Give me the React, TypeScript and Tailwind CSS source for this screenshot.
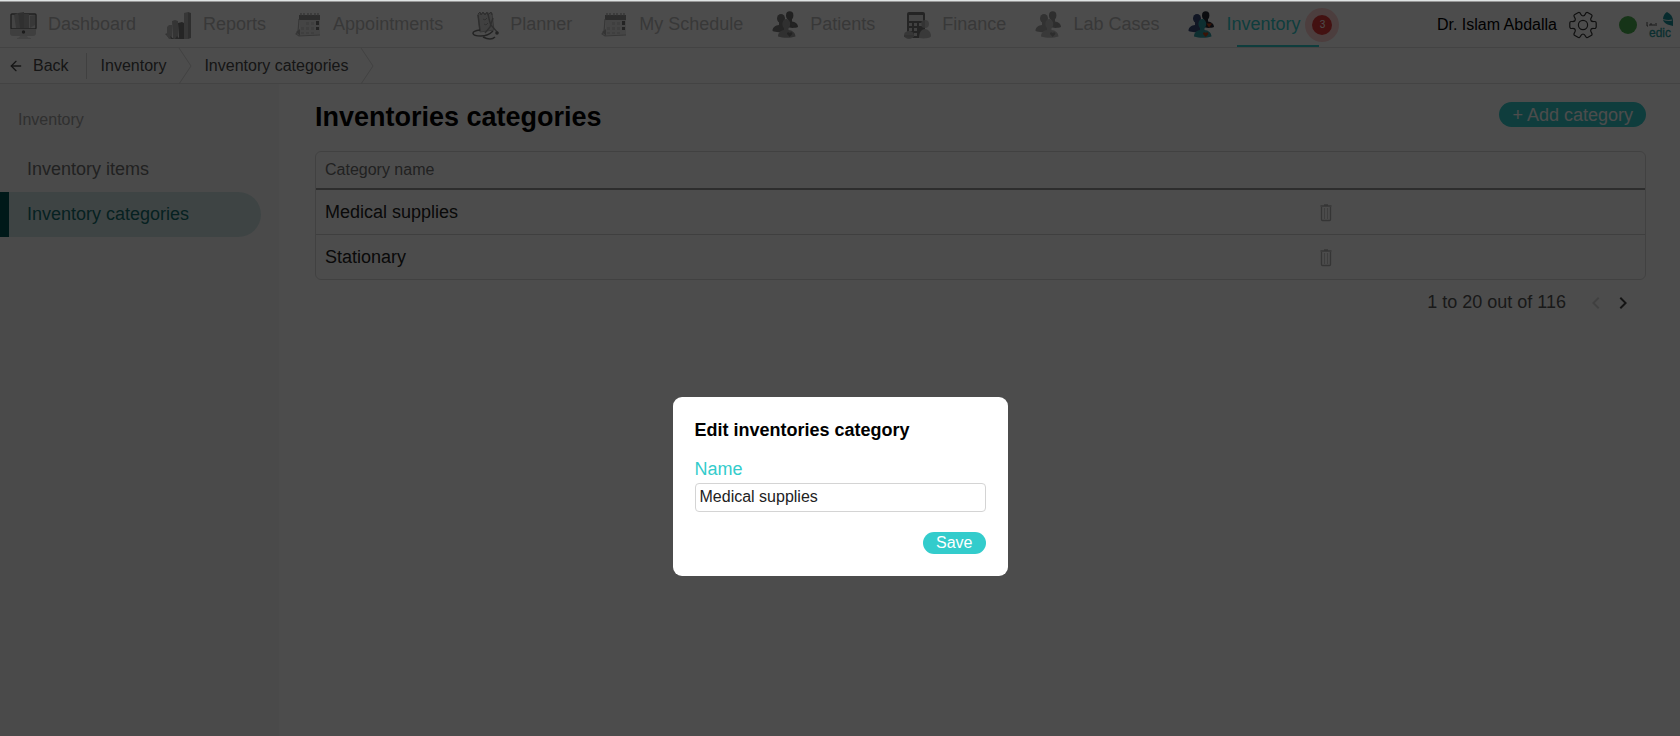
import * as React from 'react';
import { ArrowLeft } from 'lucide-react';
import { MdChevronLeft, MdChevronRight } from 'react-icons/md';

const DashboardIcon = () => (
  <svg viewBox="0 0 28 30" className="h-[30px] w-7 shrink-0" aria-hidden="true">
    <rect x="2" y="4" width="25" height="15" rx="1" fill="#e4e4e4" stroke="#6c6c6c" strokeWidth="1.4" />
    <path d="M5 5l4-2 3 15H7z" fill="#b9b9b9" />
    <path d="M9 3l6-1v16h-4z" fill="#a2a2a2" />
    <path d="M15 4h5v14h-5z" fill="#adadad" />
    <path d="M21 6l5-1v10l-5 3z" fill="#bdbdbd" />
    <path d="M1 19h26v4a3 3 0 0 1-3 3H4a3 3 0 0 1-3-3z" fill="#d2d2d2" />
    <circle cx="14.500" cy="22" r="1.700" fill="#5e5e5e" />
    <path d="M11 26h7l1 1.500 3 .5v1H8v-1l2-.5z" fill="#dcdcdc" />
  </svg>
);

const ReportsIcon = () => (
  <svg viewBox="0 0 28 30" className="h-[30px] w-7 shrink-0" aria-hidden="true">
    <path d="M1 24l5-2v7z" fill="#aaa" />
    <path d="M3 17l2-2h3v14H5l-2-3z" fill="#bcbcbc" />
    <path d="M8 11l3-1 3 1v18H9z" fill="#b2b2b2" />
    <path d="M14 13l4-1 2 1v16h-5z" fill="#7c7c7c" />
    <path d="M20 3l4-1v27h-4z" fill="#bababa" />
    <path d="M24 2l3 1v25l-3 1z" fill="#9c9c9c" />
    <path d="M6 26l4 3H7zM13 26l3 3h-5z" fill="#858585" />
  </svg>
);

const CalendarIcon = () => (
  <svg viewBox="0 0 28 30" className="h-[30px] w-7 shrink-0" aria-hidden="true">
    <path d="M6 8h20v17L5 26z" fill="#e8e8e8" />
    <path d="M5 5h21v5H5z" fill="#979797" />
    <path d="M7 3v3M10 3v3M14 3v3M17 3v3M21 3v3M24 3v3" stroke="#a8a8a8" strokeWidth="1.200" />
    <path d="M5 9L4 22l-2 2 3 2 21-1" fill="none" stroke="#b8b8b8" strokeWidth="1.200" />
    <path d="M2 22l4-3v7z" fill="#b0b0b0" />
    <path d="M12 12h3v3h-3zM17 12h3v3h-3zM7 17h3v3H7zM12 17h3v3h-3zM17 17h3v3h-3zM7 22h3v2H7zM12 22h3v2h-3zM17 22h3v2h-3z" fill="#d3d3d3" />
    <path d="M22 11h3v4h-3zM22 17h3v3h-3z" fill="#777" />
  </svg>
);

const PlannerIcon = () => (
  <svg viewBox="0 0 28 30" className="h-[30px] w-7 shrink-0" aria-hidden="true">
    <path d="M7 4l14-1 2 17-14 2z" fill="#d6d6d6" stroke="#b5b5b5" />
    <path d="M7 4l2-2 1 3 2-3 2 3 2-3 1 3 3-3 1 3" fill="none" stroke="#999" />
    <path d="M7 5l2 16" stroke="#999" strokeWidth="1.500" />
    <path d="M12 9l2 1 2-2M13 14l2 1 2-2" fill="none" stroke="#a0a0a0" />
    <path d="M17 4c1 5 2 9 3 11l7 8M22 8l-3 9-5 6" fill="none" stroke="#9a9a9a" strokeWidth="1.400" />
    <path d="M9 20c-10 1-9 6 1 6 6 0 9-2 12-5M12 27c4 2 9 3 12 0" fill="none" stroke="#777" strokeWidth="1.500" />
    <circle cx="26" cy="23" r="1.800" fill="#777" />
  </svg>
);

const FinanceIcon = () => (
  <svg viewBox="0 0 28 30" className="h-[30px] w-7 shrink-0" aria-hidden="true">
    <rect x="4" y="2" width="18" height="26" rx="2" fill="#797979" />
    <rect x="6" y="5" width="14" height="6" fill="#e8e8e8" />
    <path d="M6 13h3v3H6zM11 13h3v3h-3zM16 13h3v3h-3zM6 18h3v3H6zM11 18h3v3h-3zM11 23h3v3h-3z" fill="#dedede" />
    <circle cx="22" cy="14" r="4" fill="#bbb" fillOpacity=".8" />
    <path d="M16 28c0-6 3-9 6-9s6 3 6 7c0 2-6 3-12 2z" fill="#c0c0c0" />
    <ellipse cx="6" cy="25" rx="5" ry="4" fill="#b9b9b9" />
    <path d="M1 25h10v2a8 3 0 0 1-10 0z" fill="#a8a8a8" />
  </svg>
);

interface PeopleIconProps {
  left: string;
  right: string;
  front: string;
  heart: string;
}

const PeopleIcon = ({ left, right, front, heart }: PeopleIconProps) => (
  <svg viewBox="0 0 28 30" className="h-[30px] w-7 shrink-0" aria-hidden="true">
    <ellipse cx="18.700" cy="5.500" rx="3.700" ry="4.200" fill={right} />
    <path d="M17 9h4v2.500c3 .5 6 2 6 5.500-3 1.200-8 1.200-11 0z" fill={right} />
    <path d="M19.500 13.500h5.500l-3 4z" fill={heart} />
    <ellipse cx="10" cy="8.500" rx="4" ry="4.600" fill={left} />
    <path d="M8 12h4v3c2 0 3 2 3 6-5 1.500-10 1.500-13.500 0 0-4 3-5.500 6.500-6z" fill={left} />
    <path d="M13 18h4.500v2c4 .4 6.800 2.500 7 6.500-5 1.800-12.500 1.800-17.500 0 .2-4 2.500-6 6-6.500z" fill={front} />
    <ellipse cx="15.300" cy="14" rx="3.900" ry="4.900" fill={front} />
    <path d="M18.700 27l-2.500-2.700c-1-2 1.500-3 2.500-1.300 1-1.700 3.500-.7 2.500 1.300z" fill={heart} />
  </svg>
);

const GearIcon = () => (
  <svg viewBox="0 0 28 28" className="size-7" fill="none" stroke="#333" strokeWidth="1.200" aria-hidden="true">
    <circle cx="14" cy="14" r="4.600" />
    {[0, 60, 120, 180, 240, 300].map((angle) => (
      <path
        key={angle}
        transform={`translate(14 14) rotate(${angle})`}
        d="M7.800-4.500C8.800-3.400 9.800-3.400 10.800-3.500Q13.200-3.700 13.200-1.800V1.800Q13.200 3.700 10.800 3.500C9.800 3.400 8.800 3.400 7.800 4.500"
      />
    ))}
  </svg>
);

const ClinicLogo = () => (
  <svg viewBox="0 0 30 30" className="size-[30px]" aria-hidden="true">
    <path d="M18 9c0-3 2-6 4-7 4 2 6 5 6 9v5c-5-1-10-3-10-7z" fill="#1a8f99" />
    <path d="M18 9.500c3 1 6 1.500 9 .5" fill="none" stroke="#d5eeee" strokeWidth="1.200" />
    <path d="M2 12v4h1M5 16v-2h2v2M9 14v2M11 13v3" stroke="#555" fill="none" />
    <text x="4" y="27" fontSize="12" fontFamily="Liberation Sans, sans-serif" fill="#279c9e" stroke="#279c9e" strokeWidth=".3">
      edic
    </text>
  </svg>
);

const TrashIcon = () => (
  <svg viewBox="0 0 12 18" className="h-[18px] w-3" fill="none" stroke="#b2b2b2" aria-hidden="true">
    <path d="M.5 2h11M4 1h4" strokeWidth="1.600" />
    <path d="M1.500 3v12.500q0 1 1 1h7q1 0 1-1V3" strokeWidth="1.400" />
    <path d="M4.500 4v11M7.500 4v11" stroke="#d0d0d0" strokeWidth="1.200" />
  </svg>
);

const grayPeople = { left: '#a8a8a8', right: '#999', front: '#c0c0c0', heart: '#969696' };
const darkPeople = { left: '#7c7c7c', right: '#6e6e6e', front: '#a2a2a2', heart: '#777' };
const colorPeople = { left: '#3a4b78', right: '#272a35', front: '#2f9da5', heart: '#bd461c' };

const navItems = [
  { label: 'Dashboard', icon: <DashboardIcon /> },
  { label: 'Reports', icon: <ReportsIcon /> },
  { label: 'Appointments', icon: <CalendarIcon /> },
  { label: 'Planner', icon: <PlannerIcon /> },
  { label: 'My Schedule', icon: <CalendarIcon /> },
  { label: 'Patients', icon: <PeopleIcon {...darkPeople} /> },
  { label: 'Finance', icon: <FinanceIcon /> },
  { label: 'Lab Cases', icon: <PeopleIcon {...grayPeople} /> },
];

const categories = ['Medical supplies', 'Stationary'];

const CrumbArrow = () => (
  <svg viewBox="0 0 14 36" className="h-9 w-3.5" fill="none" stroke="#d9d9d9" aria-hidden="true">
    <path d="M1 0l12 18L1 36" />
  </svg>
);

const TopNav = () => (
  <header className="flex h-[45px] items-center justify-between bg-white pr-[5px] pl-[9px]">
    <nav className="flex h-full items-center gap-7 text-[18px] text-[#bcbcbc]">
      {navItems.map((item) => (
        <a key={item.label} href="#" className="flex items-center gap-[11px] whitespace-nowrap">
          {item.icon}
          {item.label}
        </a>
      ))}
      <a href="#" className="relative flex h-full items-center gap-[11px] text-[#33cccc]">
        <PeopleIcon {...colorPeople} />
        Inventory
        <span className="-ml-1.5 flex size-[34px] items-center justify-center rounded-full bg-[#ffd0d0]">
          <span className="flex size-5 items-center justify-center rounded-full bg-[#e03a3a] text-[10px] text-white">
            3
          </span>
        </span>
        <span className="absolute right-5 bottom-0 left-[50px] h-0.5 bg-[#33cccc]" />
      </a>
    </nav>
    <div className="flex items-center whitespace-nowrap">
      <span className="text-base text-black">Dr. Islam Abdalla</span>
      <button type="button" aria-label="Settings" className="ml-3">
        <GearIcon />
      </button>
      <span className="ml-[22px] size-[18px] rounded-full bg-[#4caf50]" />
      <a href="#" aria-label="Clinic" className="ml-2">
        <ClinicLogo />
      </a>
    </div>
  </header>
);

const Breadcrumbs = () => (
  <div className="flex h-[37px] items-center border-y border-[#e0e0e0] bg-white pl-2 text-base text-[#4a4a4a]">
    <a href="#" className="flex items-center gap-[9px]">
      <ArrowLeft size={16} />
      Back
    </a>
    <span className="mr-3.5 ml-[17px] h-[26px] w-px bg-[#d6d6d6]" />
    <a href="#" className="mr-3">Inventory</a>
    <CrumbArrow />
    <a href="#" className="mr-3 ml-3">Inventory categories</a>
    <CrumbArrow />
  </div>
);

const Sidebar = () => (
  <aside className="w-[279px] shrink-0 bg-[#f8f8f8] pt-6">
    <p className="pl-[18px] text-base text-[#a0a0a0]">Inventory</p>
    <nav className="mt-[15px] mr-[18px] text-[18px]">
      <a href="#" className="flex h-[45px] items-center pl-[27px] text-[#707070]">
        Inventory items
      </a>
      <a
        href="#"
        className="flex h-[45px] items-center rounded-r-full border-l-9 border-[#005555] bg-[#d0e4e4] pl-[18px] text-[#146e6e]"
      >
        Inventory categories
      </a>
    </nav>
  </aside>
);

const CategoriesTable = () => (
  <div className="overflow-hidden rounded-md border border-[#dadada]">
    <table className="w-full border-collapse text-left text-[18px] text-[#222]">
      <thead>
        <tr className="h-[37px] border-b-2 border-[#969696] text-base text-[#707070]">
          <th className="w-3/4 px-[9px] font-normal">Category name</th>
          <td />
        </tr>
      </thead>
      <tbody>
        {categories.map((category) => (
          <tr key={category} className="h-[45px] border-b border-[#d4d4d4] last:border-b-0">
            <td className="px-[9px] pt-0.5">{category}</td>
            <td className="px-[7px] pt-0.5">
              <button type="button" aria-label={`Delete ${category}`} className="flex">
                <TrashIcon />
              </button>
            </td>
          </tr>
        ))}
      </tbody>
    </table>
  </div>
);

interface EditCategoryModalProps {
  name: string;
  onChange: (value: string) => void;
}

const EditCategoryModal = ({ name, onChange }: EditCategoryModalProps) => (
  <div className="fixed inset-x-0 top-0.5 bottom-0 z-10 flex items-center justify-center bg-black/70 pt-[234px]">
    <form
      role="dialog"
      aria-labelledby="edit-title"
      onSubmit={(e) => e.preventDefault()}
      className="flex w-[335px] flex-col rounded-[9px] bg-white px-[22px] pt-[21px] pb-[22px]"
    >
      <h2 id="edit-title" className="text-[18px] leading-6 font-bold text-black">
        Edit inventories category
      </h2>
      <label htmlFor="category-name" className="mt-[15px] text-[18px] leading-6 text-[#33cccc]">
        Name
      </label>
      <input
        id="category-name"
        value={name}
        onChange={(e) => onChange(e.target.value)}
        className="mt-0.5 h-[29px] rounded border border-[#d4d4d4] px-1 text-base text-[#222] outline-none"
      />
      <button type="submit" className="mt-5 self-end rounded-full bg-[#33cccc] px-[13px] text-base leading-[22px] text-white">
        Save
      </button>
    </form>
  </div>
);

export default function App() {
  const [name, setName] = React.useState('Medical supplies');

  return (
    <div className="flex min-h-screen flex-col bg-white font-['Liberation_Sans',Arial,sans-serif]">
      <div className="h-0.5 border-b border-[#979797] bg-[#dfe3e3]" />
      <TopNav />
      <Breadcrumbs />
      <div className="flex grow">
        <Sidebar />
        <main className="grow pt-[17px] pr-[34px] pl-9">
          <div className="mb-[18px] flex items-start justify-between">
            <h1 className="text-[27px] leading-8 font-bold text-black">Inventories categories</h1>
            <button
              type="button"
              className="mt-px rounded-full bg-[#33cccc] px-[13px] pt-px text-[18px] leading-6 text-white"
            >
              + Add category
            </button>
          </div>
          <CategoriesTable />
          <div className="mt-[9px] flex items-center justify-end pr-[11px] text-[18px] text-[#555]">
            <span className="mr-[18px]">1 to 20 out of 116</span>
            <button type="button" aria-label="Previous page" disabled className="mr-[3px] text-[#d6d6d6]">
              <MdChevronLeft size={24} />
            </button>
            <button type="button" aria-label="Next page" className="text-[#444]">
              <MdChevronRight size={24} />
            </button>
          </div>
        </main>
      </div>
      <EditCategoryModal name={name} onChange={setName} />
    </div>
  );
}
